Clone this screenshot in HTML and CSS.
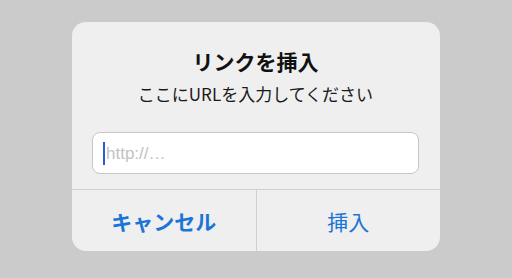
FILE: index.html
```html
<!DOCTYPE html>
<html>
    <head>
        <title>リンクを挿入</title>
        <link rel="stylesheet" href="styles.css">
    </head>
    <body>
        <div class="alert">
            <div class="alertBody">
                <div class="alertTitle">リンクを挿入</div>
                <div class="alertMsg">ここにURLを入力してください</div>
                <div class="urlField">
                    <span class="caret"></span>
                    <span class="placeholder">http://…</span>
                </div>
            </div>
            <div class="alertBtns">
                <div class="btn btnCancel">キャンセル</div>
                <div class="btn btnInsert">挿入</div>
            </div>
        </div>
    </body>
</html>
```

FILE: styles.css
```css
html, body{
    margin: 0;
    height: 100%;
}

body{
    background-color: #cbcbcb;
    font-family: "Noto Sans CJK JP", "Noto Sans", sans-serif;
    padding: 22px 0 0 72px;
    box-sizing: border-box;
}

.alert{
    width: 368px;
    height: 229px;
    background-color: #efefef;
    border-radius: 14px;
    display: flex;
    flex-direction: column;
    overflow: hidden;
}

.alertBody{
    padding: 26px 21px 15px 20px;
    text-align: center;
    border-bottom: 1px solid #d0d0d0;
}

.alertTitle{
    font-size: 21px;
    line-height: 26px;
    font-weight: bold;
    color: #111;
}

.alertMsg{
    font-size: 17px;
    line-height: 22px;
    margin-top: 9px;
    color: #1a1a1a;
}

.urlField{
    margin-top: 27px;
    height: 42px;
    box-sizing: border-box;
    background-color: #fff;
    border: 1px solid #c6c6c6;
    border-radius: 8px;
    display: flex;
    align-items: center;
    padding-left: 10px;
    text-align: left;
}

.caret{
    width: 2px;
    height: 23px;
    background-color: #2a5bd7;
}

.placeholder{
    font-family: "Liberation Sans", sans-serif;
    font-size: 17px;
    color: #c2c2c2;
    margin-left: 1px;
    padding-top: 2px;
}

.alertBtns{
    flex: 1;
    display: flex;
}

.btn{
    flex: 1;
    display: flex;
    align-items: center;
    justify-content: center;
    font-size: 21px;
    color: #1b74d8;
}

.btnCancel{
    font-weight: bold;
    border-right: 1px solid #d0d0d0;
    padding-top: 1px;
}

.btnInsert{
    padding-top: 1px;
}
```
